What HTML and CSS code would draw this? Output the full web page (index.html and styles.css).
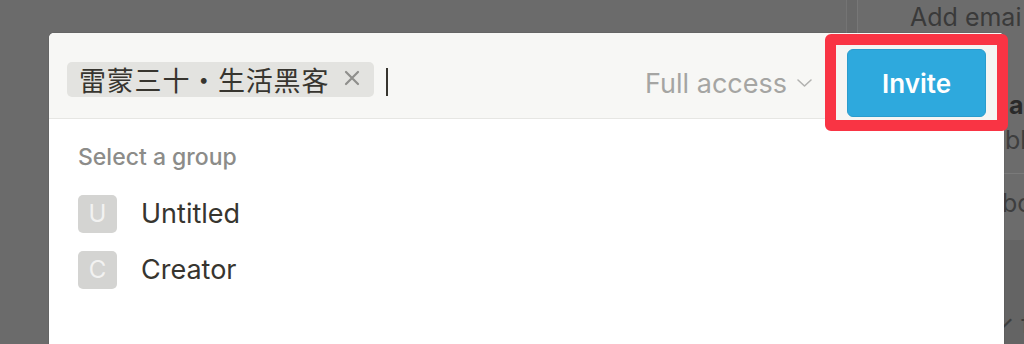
FILE: index.html
```html
<!DOCTYPE html>
<html lang="en">
<head>
<meta charset="utf-8">
<title>Invite</title>
<link rel="stylesheet" href="styles.css">
</head>
<body>
<div class="desktop">
  <div class="page-area"><div class="page-edge"></div></div>
  <aside class="side-panel">
    <div class="side-row side-input"><span class="side-text">Add emai</span></div>
    <div class="side-row side-user">
      <span class="side-strong">ar</span>
      <span class="side-sub">bli</span>
    </div>
    <div class="side-row side-body"><span class="side-text">bo</span></div>
    <div class="side-dark"><span class="side-text side-check">✓ f</span></div>
  </aside>
</div>

<div class="modal">
  <div class="modal-header">
    <div class="tag">
      <span class="tag-label">雷蒙三十・生活黑客</span>
      <svg class="tag-x" width="18" height="18" viewBox="0 0 18 18"><path d="M3 3 L15 15 M15 3 L3 15" stroke="#8f8f8c" stroke-width="2.2" stroke-linecap="round" fill="none"/></svg>
    </div>
    <span class="caret"></span>
    <div class="header-spacer"></div>
    <div class="access">
      <span>Full access</span>
      <svg class="chev" width="17" height="10" viewBox="0 0 17 10"><path d="M2 2 L8.5 8 L15 2" stroke="#b2b2b0" stroke-width="1.6" fill="none" stroke-linecap="round" stroke-linejoin="round"/></svg>
    </div>
  </div>
  <div class="modal-body">
    <div class="group-title">Select a group</div>
    <div class="group-list">
      <div class="group-item"><span class="avatar">U</span><span class="group-name">Untitled</span></div>
      <div class="group-item"><span class="avatar">C</span><span class="group-name">Creator</span></div>
    </div>
  </div>
  <div class="highlight">
    <button class="invite">Invite</button>
  </div>
</div>
</body>
</html>
```

FILE: styles.css
```css
* { box-sizing: border-box; }
html, body {
  margin: 0;
  padding: 0;
  width: 1024px;
  height: 344px;
  overflow: hidden;
  background: #6b6b6b;
  font-family: Inter, "Noto Sans CJK SC", sans-serif;
}
.desktop {
  display: flex;
  width: 1024px;
  height: 344px;
}
.page-area {
  flex: 1;
  display: flex;
  justify-content: flex-end;
}
.page-edge {
  width: 11px;
  border-left: 1px solid #747474;
  background: #686868;
}
.side-panel {
  width: 167px;
  border-left: 1px solid #777777;
  background: #6c6c6c;
  display: flex;
  flex-direction: column;
  color: #333333;
  overflow: hidden;
  white-space: nowrap;
}
.side-row {
  padding-left: 52px;
}
.side-text, .side-strong, .side-sub {
  font-size: 25px;
  line-height: 1;
}
.side-input {
  height: 40px;
  padding-top: 5px;
  color: #3a3a3a;
}
.side-user {
  height: 134px;
  display: flex;
  flex-direction: column;
  padding-top: 53px;
  padding-left: 151px;
  gap: 10px;
  border-bottom: 1px solid #7a7a7a;
}
.side-strong { font-weight: 700; color: #2a2a2a; }
.side-sub { color: #3e3e3e; padding-left: -4px; margin-left: -4px; }
.side-body {
  height: 66px;
  padding-top: 17px;
  padding-left: 144px;
  color: #3e3e3e;
}
.side-dark {
  flex: 1;
  background: #646464;
  padding-top: 72px;
  padding-left: 134px;
  color: #3e3e3e;
}

.modal {
  position: absolute;
  left: 49px;
  top: 33px;
  width: 955px;
  height: 311px;
  background: #ffffff;
  border-radius: 5px 5px 0 0;
  box-shadow: 0 0 0 1px rgba(0,0,0,0.05);
}
.modal-header {
  height: 86px;
  background: #f7f7f5;
  border-bottom: 1px solid #e6e6e3;
  border-radius: 5px 5px 0 0;
  display: flex;
  align-items: flex-start;
  padding: 0 0 0 18px;
}
.tag {
  margin-top: 29px;
  height: 35px;
  background: #e3e3e0;
  border-radius: 5px;
  display: flex;
  align-items: center;
  padding: 0 13px 0 12px;
  gap: 14px;
}
.tag-label {
  font-family: "Noto Sans CJK SC", sans-serif;
  font-size: 27px;
  color: #37352f;
  line-height: 1;
  letter-spacing: 0.8px;
}
.tag-x { display: block; margin-top: -3px; }
.caret {
  margin-top: 35px;
  margin-left: 12px;
  width: 2px;
  height: 28px;
  background: #37352f;
}
.header-spacer { flex: 1; }
.access {
  margin-top: 36px;
  margin-right: 191px;
  display: flex;
  align-items: center;
  gap: 9px;
  color: #a5a5a3;
  font-size: 27px;
  line-height: 30px;
}
.chev { display: block; margin-top: -3px; }

.modal-body {
  padding: 26px 0 0 29px;
}
.group-title {
  font-size: 23px;
  line-height: 24px;
  color: #8c8c89;
  font-weight: 500;
  margin-bottom: 26px;
}
.group-list {
  display: flex;
  flex-direction: column;
  gap: 18px;
}
.group-item {
  display: flex;
  align-items: center;
  gap: 24px;
}
.avatar {
  width: 39px;
  height: 38px;
  border-radius: 5px;
  background: #d4d4d2;
  color: #f2f2f1;
  font-size: 24px;
  display: flex;
  align-items: center;
  justify-content: center;
  line-height: 1;
}
.group-name {
  font-size: 27px;
  color: #37352f;
  line-height: 30px;
}

.highlight {
  position: absolute;
  left: 776px;
  top: 1px;
  width: 183px;
  height: 97px;
  border: 11px solid #f93444;
  border-radius: 6px;
  background: #f5f5f3;
  padding: 4px 0 0 11px;
}
.invite {
  width: 139px;
  height: 68px;
  border: 1px solid #2a9ccd;
  border-radius: 6px;
  background: #2ea9dd;
  color: #ffffff;
  font-family: Inter, sans-serif;
  font-size: 26px;
  font-weight: 600;
  padding: 0;
  cursor: pointer;
}
```
